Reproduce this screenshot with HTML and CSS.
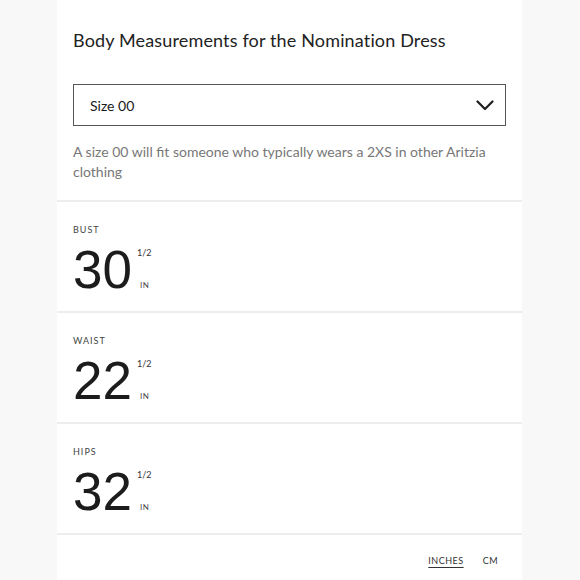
FILE: index.html
```html
<!DOCTYPE html>
<html>
<head>
<meta charset="utf-8">
<link rel="stylesheet" href="styles.css">
</head>
<body>
<div class="card">
  <div class="head">
    <h1 class="title">Body Measurements for the Nomination Dress</h1>
    <div class="select">
      <span class="select-text">Size 00</span>
      <svg class="chev" width="18" height="11" viewBox="0 0 18 11"><path d="M1.5 1.5 L9 9 L16.5 1.5" fill="none" stroke="#1e1e1e" stroke-width="2.2" stroke-linecap="round" stroke-linejoin="round"/></svg>
    </div>
    <p class="desc">A size 00 will fit someone who typically wears a 2XS in other Aritzia clothing</p>
  </div>
  <div class="section">
    <div class="label">BUST</div>
    <div class="value"><span class="num">30</span><span class="side"><span class="frac">1/2</span><span class="unit">IN</span></span></div>
  </div>
  <div class="section">
    <div class="label">WAIST</div>
    <div class="value"><span class="num">22</span><span class="side"><span class="frac">1/2</span><span class="unit">IN</span></span></div>
  </div>
  <div class="section">
    <div class="label">HIPS</div>
    <div class="value"><span class="num">32</span><span class="side"><span class="frac">1/2</span><span class="unit">IN</span></span></div>
  </div>
  <div class="units">
    <span class="unit-opt active">INCHES</span>
    <span class="unit-opt">CM</span>
  </div>
</div>
</body>
</html>
```
FILE: styles.css
```css
html, body {
  margin: 0;
  padding: 0;
  background: #f8f8f8;
}
body {
  font-family: Lato, "Liberation Sans", sans-serif;
  width: 580px;
  height: 580px;
  overflow: hidden;
}
.card {
  margin-left: 57px;
  width: 465px;
  height: 580px;
  background: #fff;
}
.head {
  padding: 24px 16px 18px;
  border-bottom: 2px solid #ededed;
}
.title {
  margin: 0;
  font-size: 18px;
  line-height: 32px;
  font-weight: 400;
  color: #222;
  letter-spacing: 0.15px;
}
.select {
  margin-top: 28px;
  height: 40px;
  border: 1.5px solid #555;
  display: flex;
  align-items: center;
  justify-content: space-between;
  padding: 0 11px 0 16px;
}
.select-text {
  font-size: 14px;
  color: #1a1a1a;
}
.chev {
  display: block;
}
.desc {
  margin: 16px 0 0;
  font-size: 14px;
  line-height: 20px;
  color: #777;
  letter-spacing: 0;
}
.section {
  padding: 22px 16px 15px;
  border-bottom: 2px solid #ededed;
}
.label {
  font-size: 9px;
  line-height: 12px;
  letter-spacing: 1px;
  color: #444;
}
.value {
  display: flex;
  margin-top: 8px;
  height: 52px;
}
.num {
  font-family: "Liberation Sans", Arial, sans-serif;
  font-size: 53px;
  line-height: 52px;
  color: #1c1c1c;
}
.side {
  display: flex;
  flex-direction: column;
  justify-content: space-between;
  margin-left: 5px;
  padding: 3px 0 6px;
}
.frac {
  font-size: 9px;
  line-height: 12px;
  color: #333;
}
.unit {
  font-size: 8px;
  line-height: 10px;
  letter-spacing: 0.6px;
  color: #444;
  margin-left: 3px;
}
.units {
  display: flex;
  justify-content: flex-end;
  gap: 19px;
  padding: 20px 24px 0 0;
}
.unit-opt {
  font-size: 9px;
  line-height: 12px;
  letter-spacing: 0.5px;
  color: #333;
}
.unit-opt.active {
  text-decoration: underline;
  text-underline-offset: 3px;
}
```
